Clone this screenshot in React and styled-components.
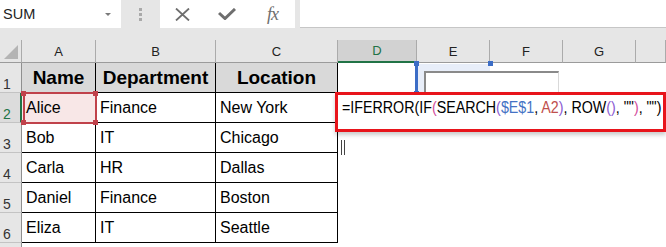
import React from 'react';
import styled, { createGlobalStyle } from 'styled-components';

const GlobalStyle = createGlobalStyle`
  html, body {
    margin: 0;
    padding: 0;
    background: #fff;
  }
  body {
    font-family: "Liberation Sans", Arial, sans-serif;
  }
  * {
    box-sizing: border-box;
  }
`;

const Window = styled.div`
  width: 666px;
  height: 247px;
  overflow: hidden;
  background: #e6e6e6;
  display: flex;
  flex-direction: column;
`;

/* ---------- formula bar ---------- */

const FormulaBar = styled.div`
  display: flex;
  align-items: flex-start;
  height: 28px;
  flex-shrink: 0;
  margin-bottom: 12px;
`;

const NameBox = styled.div`
  width: 121px;
  height: 28px;
  background: #fff;
  display: flex;
  align-items: center;
  justify-content: space-between;
  padding: 0 10px 0 3px;
  font-size: 14.5px;
  color: #222;
`;

const DropCaret = styled.span`
  width: 0;
  height: 0;
  border-left: 3px solid transparent;
  border-right: 3px solid transparent;
  border-top: 3px solid #7a7a7a;
`;

const Grip = styled.div`
  width: 39px;
  height: 28px;
  display: flex;
  flex-direction: column;
  align-items: center;
  justify-content: center;
  gap: 2px;

  span {
    width: 3px;
    height: 3px;
    background: #a9a9a9;
  }
`;

const ActionBox = styled.div`
  width: 135px;
  height: 28px;
  background: #fff;
  display: flex;
  align-items: center;
  padding-left: 15px;
  gap: 28px;

  svg {
    display: block;
  }
`;

const FxLabel = styled.span`
  font-family: "Liberation Serif", "Times New Roman", serif;
  font-style: italic;
  font-size: 18px;
  color: #6e6e6e;
  margin-left: 3px;
  letter-spacing: -1px;
`;

const FormulaInput = styled.div`
  flex: 1;
  height: 28px;
  margin-left: 5px;
  background: #fff;
  border-bottom: 1px solid #c6c6c6;
`;

/* ---------- sheet grid ---------- */

const Sheet = styled.div`
  position: relative;
  display: grid;
  grid-template-columns: 22px 74px 120px 122px 79px 73px 73px 73px 30px;
  grid-template-rows: 23px repeat(7, 30px);
  background: #fff;
`;

const Corner = styled.div`
  position: relative;
  background: #e6e6e6;
  border-right: 1px solid #ababab;
  border-bottom: 1px solid #9b9b9b;

  &::after {
    content: "";
    position: absolute;
    right: 3px;
    bottom: 3px;
    border-left: 14px solid transparent;
    border-bottom: 14px solid #b4b4b4;
  }
`;

const ColHeader = styled.div`
  background: ${p => (p.$active ? '#d2d2d2' : '#e6e6e6')};
  color: ${p => (p.$active ? '#217346' : '#222')};
  border-right: 1px solid #ababab;
  border-bottom: ${p => (p.$active ? '2px solid #217346' : '1px solid #9b9b9b')};
  display: flex;
  align-items: center;
  justify-content: center;
  font-size: 13px;
`;

const RowHeader = styled.div`
  background: ${p => (p.$active ? '#dcdcdc' : '#e6e6e6')};
  color: ${p => (p.$active ? '#217346' : '#333')};
  border-right: ${p => (p.$active ? '2px solid #217346' : '1px solid #8f8f8f')};
  border-bottom: 1px solid #c3c3c3;
  display: flex;
  align-items: flex-end;
  padding: 0 0 1px 3px;
  font-size: 14px;
  line-height: 14px;
`;

const Cell = styled.div`
  background: ${p => (p.$head ? '#d9d9d9' : p.$selected ? '#f8e7e7' : '#fff')};
  border-right: ${p => (p.$boxed ? '1px solid #000' : 'none')};
  border-bottom: ${p => (p.$boxed ? '1px solid #000' : 'none')};
  display: flex;
  align-items: center;
  justify-content: ${p => (p.$head ? 'center' : 'flex-start')};
  padding: 0 4px;
  font-size: ${p => (p.$head ? '19px' : '16px')};
  font-weight: ${p => (p.$head ? 700 : 400)};
  color: #000;
  white-space: nowrap;
  overflow: hidden;
`;

/* ---------- overlays ---------- */

const Frame = styled.div`
  position: absolute;
  left: ${p => p.$x}px;
  top: ${p => p.$y}px;
  width: ${p => p.$w}px;
  height: ${p => p.$h}px;
  border: 2px solid ${p => p.$color};
  pointer-events: none;
`;

const RefFrame = styled.div`
  position: absolute;
  left: 415px;
  top: 24px;
  width: 75px;
  height: 29px;
  background: #e8eef9;
  border-left: 3px solid #3c6dc6;
`;

const Handle = styled.span`
  position: absolute;
  width: 5px;
  height: 5px;
  background: ${p => p.$color};
  ${p => (p.$top ? 'top: -3px;' : 'bottom: -3px;')}
  ${p => (p.$left ? 'left: -4px;' : 'right: -3px;')}
`;

const InputShape = styled.div`
  position: absolute;
  left: 424px;
  top: 31px;
  width: 135px;
  height: 30px;
  background: #fff;
  border-top: 2px solid #8a8a8a;
  border-left: 2px solid #8a8a8a;
  border-right: 1px solid #d9d9d9;
`;

const Editor = styled.div`
  position: absolute;
  left: 335px;
  top: 52px;
  width: 331px;
  height: 40px;
  background: #fff;
  border: 3px solid #e8141b;
  box-shadow: 0 3px 4px rgba(0, 0, 0, 0.2);
  padding: 2px 0 0 4px;
  font-size: 17.4px;
  line-height: 20px;
  white-space: nowrap;
  overflow: hidden;
  color: #000;
`;

/* Excel draws the in-cell formula in a condensed face; squeeze Liberation Sans to match */
const FormulaText = styled.span`
  display: inline-block;
  transform: scaleX(0.82);
  transform-origin: left center;
`;

const Tok = styled.span`
  color: ${p => p.$c || '#000'};
`;

const EditCaret = styled.div`
  position: absolute;
  left: 341px;
  top: 100px;
  width: 4px;
  height: 15px;
  border-left: 1px solid #444;
  border-right: 1px solid #444;
`;

const columns = ['A', 'B', 'C', 'D', 'E', 'F', 'G', ''];

const rows = [
  ['Name', 'Department', 'Location'],
  ['Alice', 'Finance', 'New York'],
  ['Bob', 'IT', 'Chicago'],
  ['Carla', 'HR', 'Dallas'],
  ['Daniel', 'Finance', 'Boston'],
  ['Eliza', 'IT', 'Seattle'],
  null,
];

const PINK = '#d24d9b';
const PURPLE = '#8b5bd3';

function CornerHandles({ color }) {
  return (
    <>
      <Handle $color={color} $top $left />
      <Handle $color={color} $top />
      <Handle $color={color} $left />
      <Handle $color={color} />
    </>
  );
}

function App() {
  return (
    <>
      <GlobalStyle />
      <Window>
        <FormulaBar>
          <NameBox>
            SUM
            <DropCaret />
          </NameBox>
          <Grip>
            <span />
            <span />
            <span />
          </Grip>
          <ActionBox>
            <svg width="15" height="13" viewBox="0 0 15 13">
              <path d="M1 0.5 L14 12.5 M14 0.5 L1 12.5" stroke="#6e6e6e" strokeWidth="1.8" fill="none" />
            </svg>
            <svg width="18" height="12" viewBox="0 0 18 12">
              <path d="M1 5 L7 10.5 L17 1" stroke="#6e6e6e" strokeWidth="3" fill="none" />
            </svg>
            <FxLabel>fx</FxLabel>
          </ActionBox>
          <FormulaInput />
        </FormulaBar>

        <Sheet>
          <Corner />
          {columns.map((c, i) => (
            <ColHeader key={i} $active={c === 'D'}>{c}</ColHeader>
          ))}

          {rows.map((r, ri) => (
            <React.Fragment key={ri}>
              {/* row 7 is only a sliver at the bottom edge, its number falls below the window */}
              <RowHeader $active={ri === 1}>{r ? ri + 1 : ''}</RowHeader>
              {[0, 1, 2].map(ci => (
                <Cell
                  key={ci}
                  $boxed={!!r}
                  $head={ri === 0}
                  $selected={ri === 1 && ci === 0}
                >
                  {r ? r[ci] : ''}
                </Cell>
              ))}
              {[0, 1, 2, 3, 4].map(ci => (
                <Cell key={'e' + ci} />
              ))}
            </React.Fragment>
          ))}

          <RefFrame>
            <CornerHandles color="#3c6dc6" />
          </RefFrame>
          <InputShape />

          <Frame $x={23} $y={52} $w={74} $h={32} $color="#c0424b">
            <CornerHandles color="#c0424b" />
          </Frame>

          <Editor>
            <FormulaText>
              <Tok>=IFERROR(IF</Tok>
              <Tok $c={PINK}>(</Tok>
              <Tok>SEARCH</Tok>
              <Tok $c={PURPLE}>(</Tok>
              <Tok $c="#4472c4">$E$1</Tok>
              <Tok>, </Tok>
              <Tok $c="#c0504d">A2</Tok>
              <Tok $c={PURPLE}>)</Tok>
              <Tok>, ROW</Tok>
              <Tok $c={PURPLE}>()</Tok>
              <Tok>, ""</Tok>
              <Tok $c={PINK}>)</Tok>
              <Tok>, "")</Tok>
            </FormulaText>
          </Editor>
          <EditCaret />
        </Sheet>
      </Window>
    </>
  );
}

export default App;
